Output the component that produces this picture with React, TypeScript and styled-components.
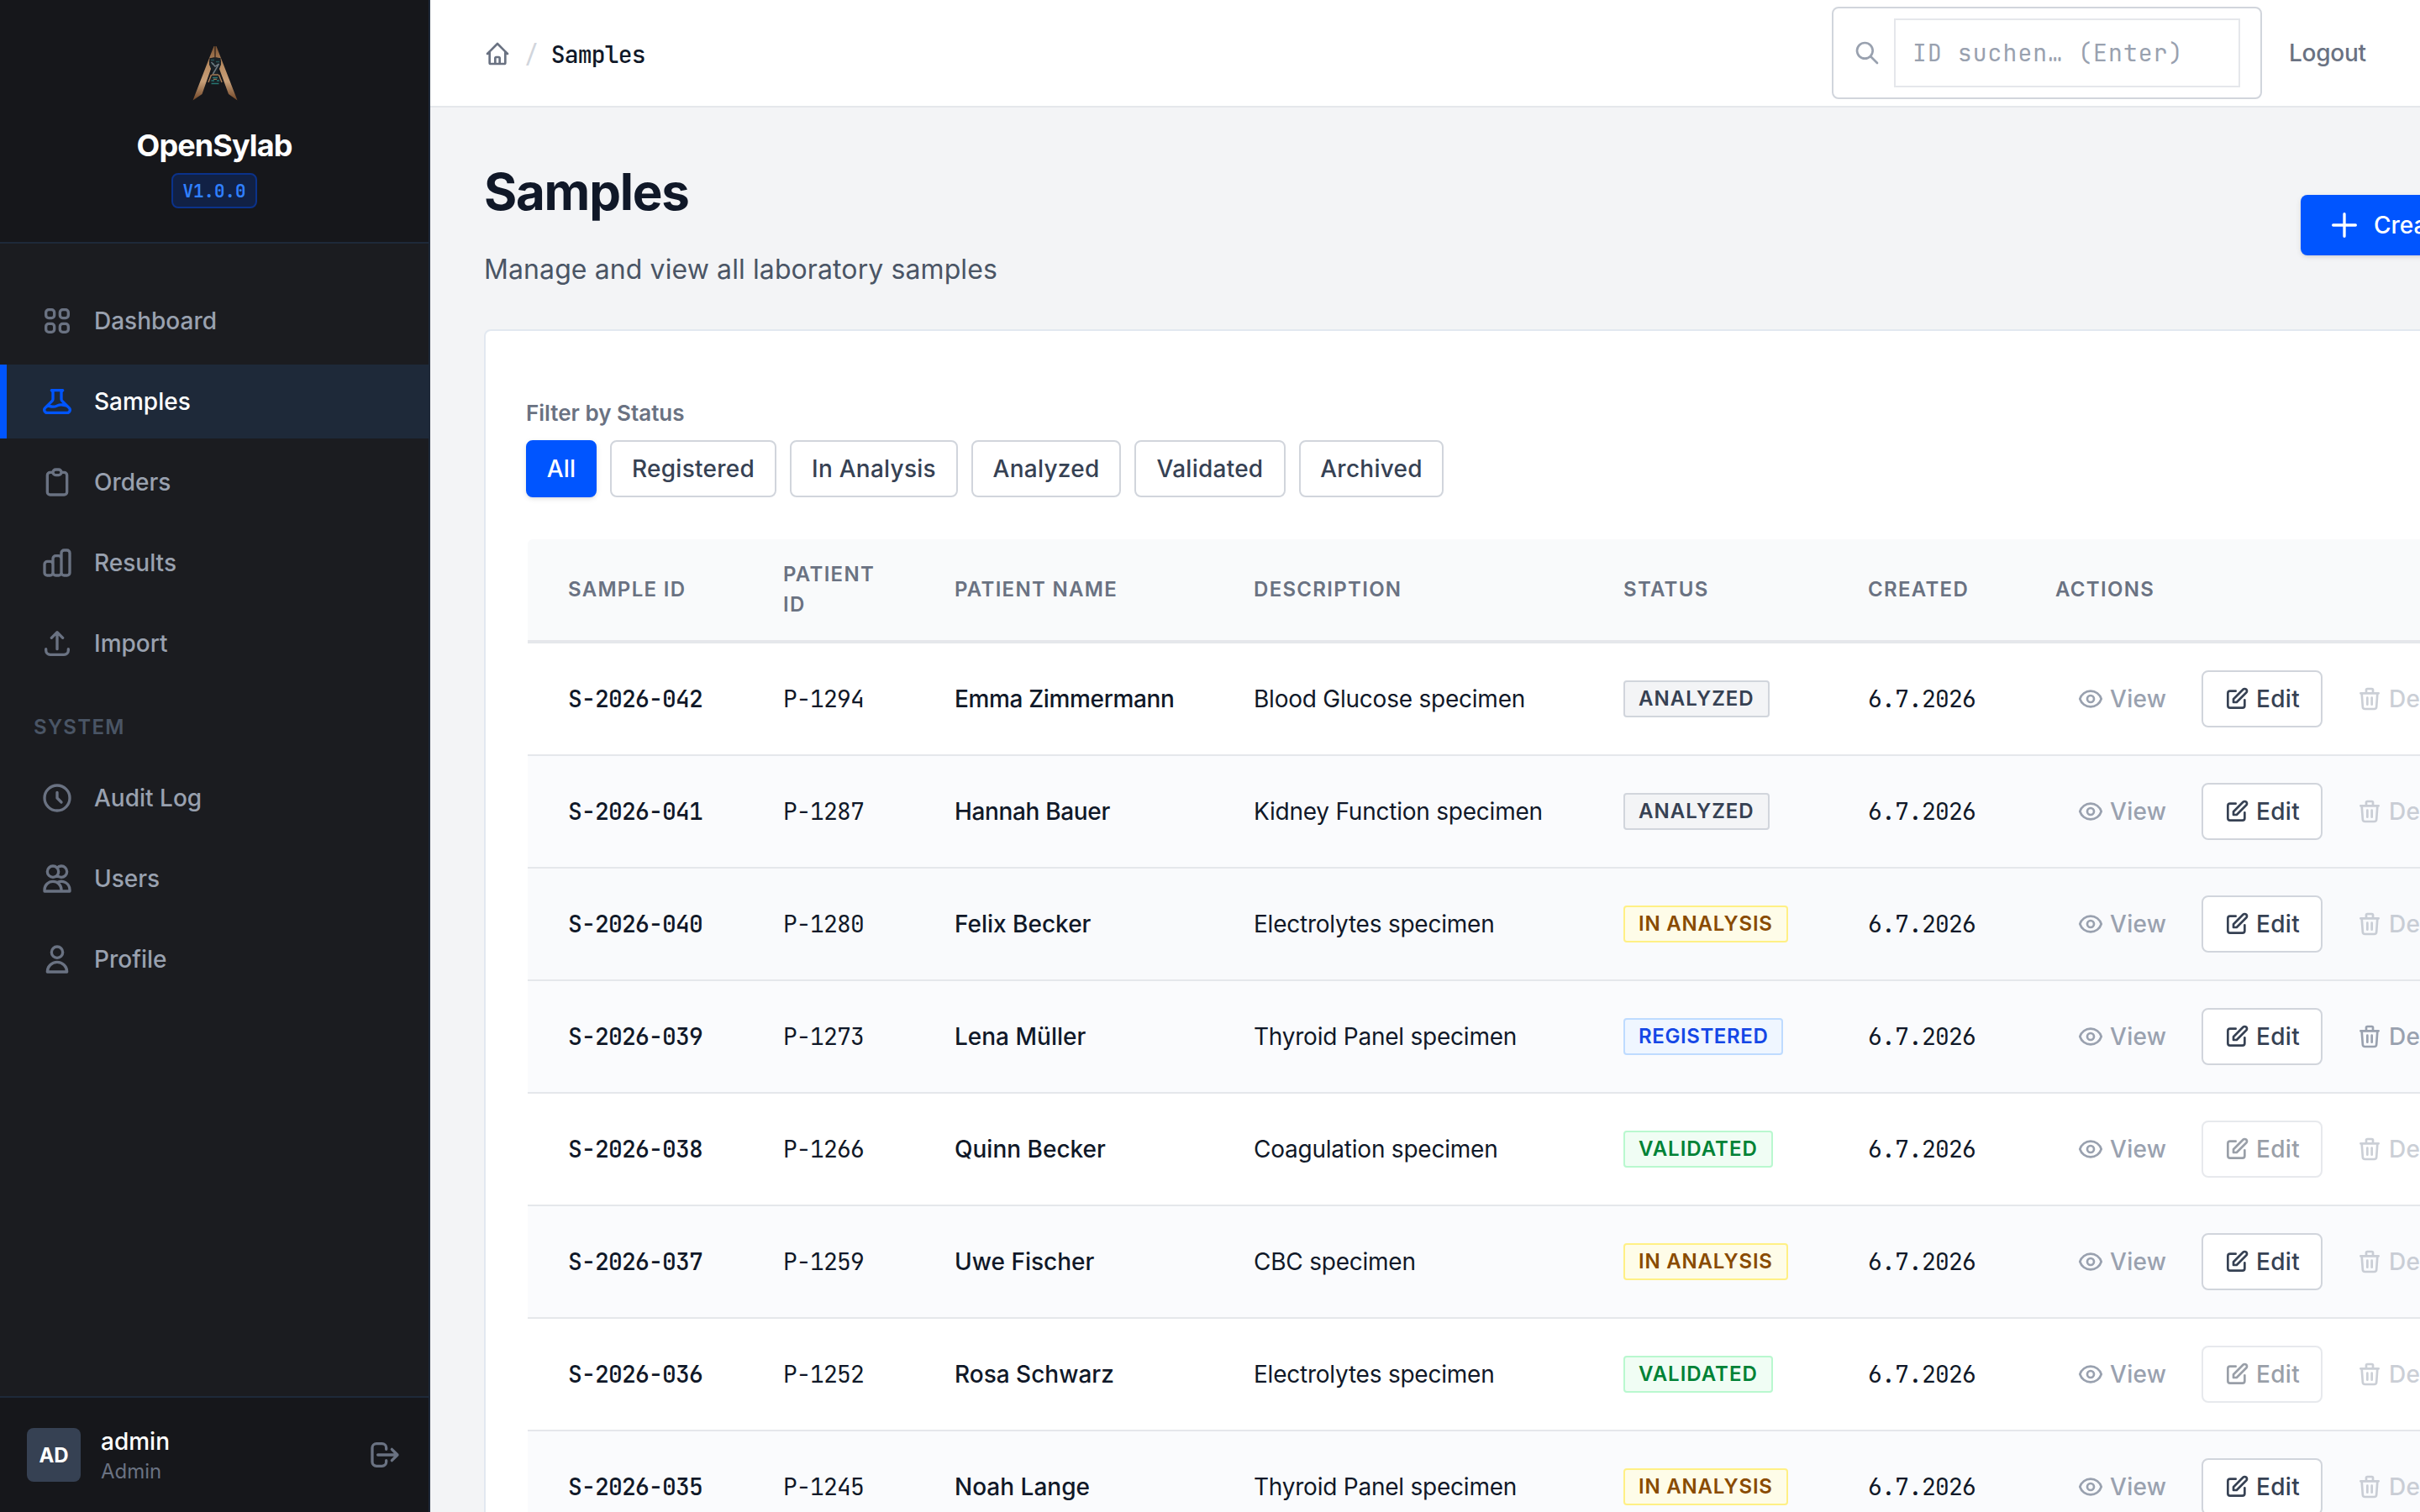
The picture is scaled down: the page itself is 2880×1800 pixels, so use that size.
import React from "react";
import styled, { createGlobalStyle, css } from "styled-components";
import {
  HiOutlineBeaker,
  HiOutlineChartBar,
  HiOutlineClipboard,
  HiOutlineClock,
  HiOutlineEye,
  HiOutlineHome,
  HiOutlineLogout,
  HiOutlinePencilAlt,
  HiOutlinePlus,
  HiOutlineSearch,
  HiOutlineTrash,
  HiOutlineUpload,
  HiOutlineUser,
  HiOutlineViewGrid,
} from "react-icons/hi";

type Status = "Registered" | "In Analysis" | "Analyzed" | "Validated";

interface Sample {
  id: string;
  patientId: string;
  patientName: string;
  description: string;
  status: Status;
  created: string;
}

const samples: Sample[] = [
  { id: "S-2026-042", patientId: "P-1294", patientName: "Emma Zimmermann", description: "Blood Glucose specimen", status: "Analyzed", created: "6.7.2026" },
  { id: "S-2026-041", patientId: "P-1287", patientName: "Hannah Bauer", description: "Kidney Function specimen", status: "Analyzed", created: "6.7.2026" },
  { id: "S-2026-040", patientId: "P-1280", patientName: "Felix Becker", description: "Electrolytes specimen", status: "In Analysis", created: "6.7.2026" },
  { id: "S-2026-039", patientId: "P-1273", patientName: "Lena Müller", description: "Thyroid Panel specimen", status: "Registered", created: "6.7.2026" },
  { id: "S-2026-038", patientId: "P-1266", patientName: "Quinn Becker", description: "Coagulation specimen", status: "Validated", created: "6.7.2026" },
  { id: "S-2026-037", patientId: "P-1259", patientName: "Uwe Fischer", description: "CBC specimen", status: "In Analysis", created: "6.7.2026" },
  { id: "S-2026-036", patientId: "P-1252", patientName: "Rosa Schwarz", description: "Electrolytes specimen", status: "Validated", created: "6.7.2026" },
  { id: "S-2026-035", patientId: "P-1245", patientName: "Noah Lange", description: "Thyroid Panel specimen", status: "In Analysis", created: "6.7.2026" },
];

const filters = [
  { label: "All", width: 84 },
  { label: "Registered", width: 198 },
  { label: "In Analysis", width: 200 },
  { label: "Analyzed", width: 178 },
  { label: "Validated", width: 180 },
  { label: "Archived", width: 172 },
];

const columns = [
  { label: "Sample ID", width: 256 },
  { label: "Patient ID", width: 204 },
  { label: "Patient Name", width: 356 },
  { label: "Description", width: 440 },
  { label: "Status", width: 291 },
  { label: "Created", width: 223 },
  { label: "Actions", width: 602 },
];

const UsersIcon = () => (
  <svg viewBox="0 0 24 24" fill="none" stroke="currentColor" strokeWidth="2" strokeLinecap="round" strokeLinejoin="round">
    <path d="M12 4.354a4 4 0 110 5.292M15 21H3v-1a6 6 0 0112 0v1zm0 0h6v-1a6 6 0 00-9-5.197M13 7a4 4 0 11-8 0 4 4 0 018 0z" />
  </svg>
);

const Logo = () => (
  <LogoSvg viewBox="-1 0 80 80" fill="none">
    <defs>
      <linearGradient id="bronze" x1="0" y1="0" x2="0" y2="1">
        <stop offset="0" stopColor="#7d5535" />
        <stop offset="0.35" stopColor="#b98c62" />
        <stop offset="0.65" stopColor="#c79f78" />
        <stop offset="1" stopColor="#6f4527" />
      </linearGradient>
    </defs>
    <path d="M38.5 7 L13.5 71.5 L24.5 64 L35 34 L33 25 L35 21 L40 20 L40 7 Z" fill="url(#bronze)" />
    <path d="M41.5 7 L66.5 71.5 L56 64 L45 34 L47 25 L45 21 L40 20 L40 7 Z" fill="url(#bronze)" />
    <path d="M40 7v14" stroke="#3a2a1f" strokeWidth="1.5" />
    <path d="M33.5 21h13l.5 8-4 8.500 2.500 5 1 8h-13l1-8 2.500-5-4-8.500z" fill="#1a2126" />
    <path d="M35 23.500h4M41 25.500h4M36 28h3" stroke="#265456" strokeWidth="1.4" />
    <path d="M35.500 26l4.500 5 4.500-3-7 12" stroke="#6f7980" strokeWidth="1.5" />
    <path d="M35.500 41l-3.500 9M44.500 41l3.500 9M36 41h8" stroke="#a57b55" strokeWidth="1.5" />
    <path d="M37 44.500h6M35.500 48h3.500M42 48h3M35.500 51.500h9" stroke="#277570" strokeWidth="1.3" />
    <path d="M38 46.300h4" stroke="#b58a62" strokeWidth="1" />
  </LogoSvg>
);

const mainNav = [
  { label: "Dashboard", icon: <HiOutlineViewGrid /> },
  { label: "Samples", icon: <HiOutlineBeaker />, active: true },
  { label: "Orders", icon: <HiOutlineClipboard /> },
  { label: "Results", icon: <HiOutlineChartBar /> },
  { label: "Import", icon: <HiOutlineUpload /> },
];

const systemNav = [
  { label: "Audit Log", icon: <HiOutlineClock /> },
  { label: "Users", icon: <UsersIcon /> },
  { label: "Profile", icon: <HiOutlineUser /> },
];

const Sidebar = () => (
  <SidebarContainer>
    <Brand>
      <Logo />
      <BrandName>OpenSylab</BrandName>
      <Version>V1.0.0</Version>
    </Brand>
    <Nav>
      {mainNav.map((item) => (
        <NavItem key={item.label} href="#" $active={item.active}>
          {item.icon}
          {item.label}
        </NavItem>
      ))}
      <NavSection>SYSTEM</NavSection>
      {systemNav.map((item) => (
        <NavItem key={item.label} href="#">
          {item.icon}
          {item.label}
        </NavItem>
      ))}
    </Nav>
    <UserPanel>
      <Avatar>AD</Avatar>
      <UserInfo>
        <UserName>admin</UserName>
        <UserRole>Admin</UserRole>
      </UserInfo>
      <LogoutIconButton type="button" aria-label="Logout">
        <HiOutlineLogout />
      </LogoutIconButton>
    </UserPanel>
  </SidebarContainer>
);

const SampleRow = ({ sample, hovered }: { sample: Sample; hovered: boolean }) => (
  <Row $hovered={hovered}>
    <MonoCell $strong>{sample.id}</MonoCell>
    <MonoCell>{sample.patientId}</MonoCell>
    <NameCell $tight={/mm|nna/.test(sample.patientName)}>{sample.patientName}</NameCell>
    <DescriptionCell>{sample.description}</DescriptionCell>
    <Cell>
      <Badge $status={sample.status}>{sample.status}</Badge>
    </Cell>
    <MonoCell>{sample.created}</MonoCell>
    <Cell>
      <Actions>
        <GhostButton type="button" $width={160}>
          <HiOutlineEye />
          View
        </GhostButton>
        <OutlineButton type="button" $width={144} disabled={sample.status === "Validated"}>
          <HiOutlinePencilAlt />
          Edit
        </OutlineButton>
        <GhostButton type="button" $width={178} disabled={sample.status !== "Registered"}>
          <HiOutlineTrash />
          Delete
        </GhostButton>
      </Actions>
    </Cell>
  </Row>
);

const App = () => (
  <>
    <GlobalStyle />
    <Layout>
      <Sidebar />
      <Main>
        <TopBar>
          <Breadcrumb>
            <HiOutlineHome />
            <Slash>/</Slash>
            <Crumb>Samples</Crumb>
          </Breadcrumb>
          <TopActions>
            <SearchBox>
              <HiOutlineSearch />
              <SearchInput placeholder="ID suchen… (Enter)" />
            </SearchBox>
            <LogoutLink href="#">Logout</LogoutLink>
          </TopActions>
        </TopBar>

        <Content>
          <PageHeader>
            <div>
              <Title>Samples</Title>
              <Subtitle>Manage and view all laboratory samples</Subtitle>
            </div>
            <PrimaryButton type="button">
              <HiOutlinePlus />
              Create Sample
            </PrimaryButton>
          </PageHeader>

          <Card>
            <FilterLabel>Filter by Status</FilterLabel>
            <FilterGroup>
              {filters.map((filter) => (
                <FilterButton key={filter.label} type="button" $width={filter.width} $active={filter.label === "All"}>
                  {filter.label}
                </FilterButton>
              ))}
            </FilterGroup>
            <Table>
              <colgroup>
                {columns.map((column) => (
                  <Column key={column.label} $width={column.width} />
                ))}
              </colgroup>
              <thead>
                <tr>
                  {columns.map((column) => (
                    <HeadCell key={column.label}>{column.label}</HeadCell>
                  ))}
                </tr>
              </thead>
              <tbody>
                {samples.map((sample, index) => (
                  <SampleRow key={sample.id} sample={sample} hovered={index === 2} />
                ))}
              </tbody>
            </Table>
          </Card>
        </Content>
      </Main>
    </Layout>
  </>
);

// --- Styled Components ---

const sans = `Inter, "Liberation Sans", sans-serif`;
const mono = `"JetBrains Mono", "DejaVu Sans Mono", "Liberation Mono", monospace`;

const GlobalStyle = createGlobalStyle`
  *, *::before, *::after {
    box-sizing: border-box;
  }

  body {
    margin: 0;
    overflow: hidden;
    background-color: #f3f4f6;
    font-family: ${sans};
    color: #101828;
    -webkit-font-smoothing: antialiased;
  }

  button, input {
    font: inherit;
  }

  svg {
    flex-shrink: 0;
  }
`;

const Layout = styled.div`
  display: flex;
  height: 1800px;
  overflow: hidden;
`;

const SidebarContainer = styled.aside`
  display: flex;
  flex-direction: column;
  flex-shrink: 0;
  width: 512px;
  background-color: #1b1c20;
  border-right: 2px solid #1e2939;
`;

const Brand = styled.div`
  display: flex;
  flex-direction: column;
  align-items: center;
  height: 290px;
  padding-top: 48px;
  background-color: #16171b;
  border-bottom: 2px solid #1e2939;
`;

const LogoSvg = styled.svg`
  width: 80px;
  height: 80px;
`;

const BrandName = styled.div`
  margin-top: 17px;
  font-size: 36px;
  line-height: 56px;
  font-weight: 700;
  letter-spacing: -0.9px;
  color: #fff;
`;

const Version = styled.span`
  margin-top: 5px;
  height: 42px;
  padding: 0 12px;
  border: 2px solid #0b328a;
  border-radius: 8px;
  background-color: #112145;
  font-family: ${mono};
  font-size: 20.8px;
  line-height: 39px;
  font-weight: 700;
  color: #3080ff;
`;

const Nav = styled.nav`
  display: flex;
  flex-direction: column;
  flex: 1;
  gap: 8px;
  padding-top: 48px;
`;

const NavItem = styled.a<{ $active?: boolean }>`
  display: flex;
  align-items: center;
  gap: 24px;
  height: 88px;
  padding-left: 40px;
  border-left: 8px solid transparent;
  font-size: 28px;
  font-weight: 500;
  color: #99a1af;
  text-decoration: none;

  svg {
    width: 40px;
    height: 40px;
    color: #6a7282;
  }

  ${({ $active }) =>
    $active &&
    css`
      background-color: #1e2939;
      border-left-color: #0055ff;
      color: #fff;

      svg {
        color: #0055ff;
      }
    `}
`;

const NavSection = styled.div`
  height: 80px;
  padding: 30px 40px 0;
  font-size: 24px;
  line-height: 36px;
  font-weight: 600;
  letter-spacing: 1.3px;
  color: #4a5565;
`;

const UserPanel = styled.div`
  display: flex;
  align-items: center;
  height: 138px;
  padding: 0 32px;
  background-color: #16171b;
  border-top: 2px solid #1e2939;
`;

const Avatar = styled.div`
  display: flex;
  align-items: center;
  justify-content: center;
  width: 64px;
  height: 64px;
  border-radius: 8px;
  background-color: #364153;
  font-size: 24px;
  font-weight: 700;
  color: #fff;
`;

const UserInfo = styled.div`
  flex: 1;
  padding: 4px 0 0 24px;
`;

const UserName = styled.div`
  font-size: 28px;
  line-height: 36px;
  font-weight: 500;
  color: #fff;
`;

const UserRole = styled.div`
  font-size: 24px;
  line-height: 36px;
  color: #6a7282;
`;

const LogoutIconButton = styled.button`
  display: flex;
  padding: 0;
  border: none;
  background: none;
  color: #6a7282;

  svg {
    width: 40px;
    height: 40px;
  }
`;

const Main = styled.main`
  flex: 1;
  min-width: 0;
  overflow: hidden;
`;

const TopBar = styled.header`
  display: flex;
  align-items: center;
  justify-content: space-between;
  height: 128px;
  padding: 0 64px;
  background-color: #fff;
  border-bottom: 2px solid #e5e7eb;
`;

const Breadcrumb = styled.div`
  display: flex;
  align-items: center;
  padding-top: 2px;
  font-family: ${mono};
  font-size: 28px;

  svg {
    width: 32px;
    height: 32px;
    color: #6a7282;
  }
`;

const Slash = styled.span`
  margin: 0 16px;
  color: #d1d5dc;
`;

const Crumb = styled.span`
  margin-left: -1px;
  font-weight: 500;
  letter-spacing: -0.8px;
`;

const TopActions = styled.div`
  display: flex;
  align-items: center;
  gap: 32px;
`;

const SearchBox = styled.div`
  display: flex;
  align-items: center;
  gap: 16px;
  width: 512px;
  height: 110px;
  padding: 0 24px;
  border: 2px solid #d1d5dc;
  border-radius: 8px;

  svg {
    width: 32px;
    height: 32px;
    color: #99a1af;
  }
`;

const SearchInput = styled.input`
  width: 412px;
  height: 82px;
  padding: 0 20px 2px;
  border: 2px solid #e5e7eb;
  background-color: #fff;
  font-family: ${mono};
  font-size: 28px;
  letter-spacing: 1.12px;
  outline: none;

  &::placeholder {
    color: #99a1af;
  }
`;

const LogoutLink = styled.a`
  width: 92px;
  font-size: 28px;
  font-weight: 500;
  letter-spacing: -0.25px;
  color: #6a7282;
  text-decoration: none;
`;

const Content = styled.div`
  width: 2540px;
  padding: 64px 0 0 64px;
`;

const PageHeader = styled.div`
  display: flex;
  align-items: center;
  justify-content: space-between;
  height: 152px;
`;

const Title = styled.h1`
  margin: 0;
  font-size: 60px;
  line-height: 73px;
  font-weight: 700;
  letter-spacing: -1.25px;
`;

const Subtitle = styled.p`
  margin: 32px 0 0;
  font-size: 32px;
  line-height: 48px;
  letter-spacing: 0.1px;
  color: #4a5565;
`;

const buttonBase = css`
  display: inline-flex;
  align-items: center;
  border-radius: 8px;
  font-size: 28px;
  font-weight: 500;
  white-space: nowrap;
`;

const PrimaryButton = styled.button`
  ${buttonBase}
  gap: 15px;
  width: 314px;
  height: 72px;
  padding: 0 32px;
  border: none;
  background-color: #0055ff;
  box-shadow: 0 2px 6px rgba(0, 0, 0, 0.1), 0 2px 4px -2px rgba(0, 0, 0, 0.1);
  color: #fff;

  svg {
    width: 40px;
    height: 40px;
  }
`;

const Card = styled.section`
  height: 1500px;
  margin-top: 48px;
  padding: 78px 48px 0;
  border: 2px solid #e2e8f0;
  border-radius: 8px;
  background-color: #fff;
`;

const FilterLabel = styled.div`
  margin-bottom: 12px;
  font-size: 26px;
  line-height: 40px;
  font-weight: 600;
  color: #6a7282;
`;

const FilterGroup = styled.div`
  display: flex;
  gap: 16px;
`;

const FilterButton = styled.button<{ $width: number; $active: boolean }>`
  ${buttonBase}
  justify-content: center;
  width: ${({ $width }) => $width}px;
  height: 68px;
  padding: 0;
  border: 2px solid #d1d5dc;
  background-color: #fff;
  letter-spacing: 0.25px;
  color: #364153;

  ${({ $active }) =>
    $active &&
    css`
      border-color: #0055ff;
      background-color: #0055ff;
      box-shadow: 0 2px 6px rgba(0, 0, 0, 0.1), 0 2px 4px -2px rgba(0, 0, 0, 0.1);
      color: #fff;
    `}
`;

const Table = styled.table`
  table-layout: fixed;
  width: 2372px;
  margin: 50px 0 0 2px;
  border-spacing: 0;
`;

const Column = styled.col<{ $width: number }>`
  width: ${({ $width }) => $width}px;
`;

const HeadCell = styled.th`
  padding: 24px 48px;
  border-bottom: 4px solid #e5e7eb;
  background-color: #f9fafb;
  font-size: 24px;
  line-height: 36px;
  font-weight: 600;
  letter-spacing: 1.3px;
  text-align: left;
  text-transform: uppercase;
  color: #6a7282;

  &:first-child {
    border-top-left-radius: 6px;
  }
`;

const Row = styled.tr<{ $hovered: boolean }>`
  &:nth-child(even) {
    background-color: #fafbfd;
  }

  ${({ $hovered }) =>
    $hovered &&
    css`
      background-color: #f9fafc;
    `}
`;

const Cell = styled.td`
  height: 134px;
  padding: 0 48px;
  border-bottom: 2px solid #e5e7eb;
  font-size: 28px;
  line-height: 40px;
  white-space: nowrap;
`;

const MonoCell = styled(Cell)<{ $strong?: boolean }>`
  font-family: ${mono};
  font-weight: ${({ $strong }) => ($strong ? 500 : 400)};
  letter-spacing: -0.8px;
`;

const NameCell = styled(Cell)<{ $tight: boolean }>`
  font-weight: 500;
  letter-spacing: ${({ $tight }) => ($tight ? "-0.35px" : "0")};
`;

const DescriptionCell = styled(Cell)`
  letter-spacing: -0.23px;
`;

const badgeStyles = {
  Analyzed: css`
    width: 174px;
    border-color: #d1d5dc;
    background-color: #f3f4f6;
    letter-spacing: 1px;
    color: #364153;
  `,
  "In Analysis": css`
    width: 196px;
    border-color: #fff085;
    background-color: #fefce8;
    letter-spacing: 0.8px;
    color: #894b00;
  `,
  Registered: css`
    width: 190px;
    border-color: #bedbff;
    background-color: #eff6ff;
    letter-spacing: 0.6px;
    color: #1447e6;
  `,
  Validated: css`
    width: 178px;
    border-color: #b9f8cf;
    background-color: #f0fdf4;
    letter-spacing: 1px;
    color: #008236;
  `,
};

const Badge = styled.span<{ $status: Status }>`
  display: inline-block;
  height: 44px;
  padding-left: 16px;
  border: 2px solid;
  border-radius: 4px;
  font-size: 24px;
  line-height: 40px;
  font-weight: 600;
  text-transform: uppercase;
  vertical-align: middle;
  ${({ $status }) => badgeStyles[$status]}
`;

const Actions = styled.div`
  display: flex;
  gap: 14px;
`;

const GhostButton = styled.button<{ $width: number }>`
  ${buttonBase}
  flex-shrink: 0;
  gap: 7px;
  width: ${({ $width }) => $width}px;
  height: 68px;
  padding: 0 0 0 24px;
  border: 2px solid transparent;
  background: none;
  letter-spacing: 0.3px;
  color: #99a1af;

  svg {
    width: 32px;
    height: 32px;
  }

  &:disabled {
    opacity: 0.5;
  }
`;

const OutlineButton = styled(GhostButton)`
  border-color: #d1d5dc;
  background-color: #fff;
  color: #364153;
`;

export default App;
